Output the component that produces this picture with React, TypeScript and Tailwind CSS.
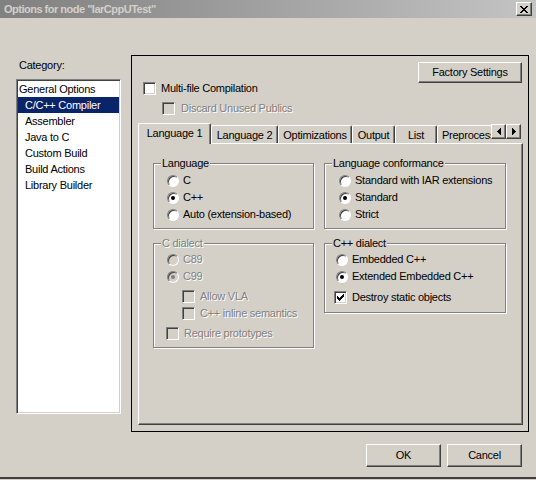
import type { ReactNode } from 'react';

const raised =
  'border border-t-white border-l-white border-r-[#404040] border-b-[#404040] shadow-[inset_-1px_-1px_#808080]';
const sunken =
  'border border-t-[#808080] border-l-[#808080] border-r-white border-b-white shadow-[inset_1px_1px_#404040,inset_-1px_-1px_#d4d0c8]';

function Label({ disabled, children }: { disabled?: boolean; children: ReactNode }) {
  return (
    <span className={disabled ? 'whitespace-nowrap text-[#808080] [text-shadow:1px_1px_0_#ffffff]' : 'whitespace-nowrap text-black'}>
      {children}
    </span>
  );
}

function Check({ checked, disabled }: { checked?: boolean; disabled?: boolean }) {
  return (
    <span
      className={`flex h-[13px] w-[13px] shrink-0 items-center justify-center ${sunken} ${
        disabled ? 'bg-[#d4d0c8]' : 'bg-white'
      }`}
    >
      {checked && (
        <svg width="7" height="7" viewBox="0 0 7 7" fill={disabled ? '#808080' : '#000'}>
          <path d="M0 2h1v3H0z M1 3h1v3H1z M2 4h1v3H2z M3 3h1v3H3z M4 2h1v3H4z M5 1h1v3H5z M6 0h1v3H6z" />
        </svg>
      )}
    </span>
  );
}

function Radio({ checked, disabled }: { checked?: boolean; disabled?: boolean }) {
  return (
    <span
      className={`flex h-[12px] w-[12px] shrink-0 items-center justify-center rounded-full border border-t-[#808080] border-l-[#808080] border-r-white border-b-white shadow-[inset_1px_1px_#404040] ${
        disabled ? 'bg-[#d4d0c8]' : 'bg-white'
      }`}
    >
      {checked && <span className={`h-[4px] w-[4px] rounded-full ${disabled ? 'bg-[#808080]' : 'bg-black'}`} />}
    </span>
  );
}

function RadioRow({ label, checked, disabled }: { label: string; checked?: boolean; disabled?: boolean }) {
  return (
    <div className="flex h-[17px] items-center gap-[4px]">
      <Radio checked={checked} disabled={disabled} />
      <Label disabled={disabled}>{label}</Label>
    </div>
  );
}

function CheckRow({
  label,
  checked,
  disabled,
  className = '',
}: {
  label: string;
  checked?: boolean;
  disabled?: boolean;
  className?: string;
}) {
  return (
    <div className={`flex h-[17px] items-center gap-[5px] ${className}`}>
      <Check checked={checked} disabled={disabled} />
      <Label disabled={disabled}>{label}</Label>
    </div>
  );
}

function Group({
  title,
  disabled,
  className,
  children,
}: {
  title: string;
  disabled?: boolean;
  className: string;
  children: ReactNode;
}) {
  return (
    <div className={`relative border border-[#808080] shadow-[inset_1px_1px_#ffffff,1px_1px_#ffffff] ${className}`}>
      <span className="absolute left-[7px] top-[-7px] bg-[#d4d0c8] px-[1px] leading-[13px]">
        <Label disabled={disabled}>{title}</Label>
      </span>
      {children}
    </div>
  );
}

function Button({ children, className }: { children: ReactNode; className: string }) {
  return (
    <button type="button" className={`flex items-center justify-center bg-[#d4d0c8] text-black ${raised} ${className}`}>
      {children}
    </button>
  );
}

const tabs = [
  { label: 'Language 2', w: 'w-[67px]' },
  { label: 'Optimizations', w: 'w-[74px]' },
  { label: 'Output', w: 'w-[43px]' },
  { label: 'List', w: 'w-[42px]' },
];

const categories = ['Assembler', 'Java to C', 'Custom Build', 'Build Actions', 'Library Builder'];

export default function App() {
  return (
    <div className="flex h-[480px] w-[536px] flex-col overflow-hidden bg-[#d4d0c8] font-['Liberation_Sans',Arial,sans-serif] text-[11px] leading-[13px] tracking-[-0.25px] text-black">
      {/* title bar */}
      <div className="flex h-[18px] shrink-0 items-center justify-between bg-linear-to-r from-[#808080] to-[#c4c4c4] pl-[4px] pr-[4px]">
        <span className="text-[11px] font-bold tracking-[-0.5px] text-[#d4d0c8]">Options for node "IarCppUTest"</span>
        <span className={`flex h-[14px] w-[16px] items-center justify-center bg-[#d4d0c8] ${raised}`}>
          <svg width="8" height="7" viewBox="0 0 8 7" fill="#000">
            <path d="M0 0h2v1H0z M6 0h2v1H6z M1 1h2v1H1z M5 1h2v1H5z M2 2h4v1H2z M3 3h2v1H3z M2 4h4v1H2z M1 5h2v1H1z M5 5h2v1H5z M0 6h2v1H0z M6 6h2v1H6z" />
          </svg>
        </span>
      </div>

      {/* body */}
      <div className="flex pt-[37px]">
        <div className="flex flex-col pl-[16px]">
          <div className="mt-[4px] h-[13px] pl-[3px]">Category:</div>
          <div className={`mt-[7px] h-[335px] w-[105px] bg-white p-[1px] ${sunken}`}>
            <div className="h-[16px] pl-[1px] leading-[16px]">General Options</div>
            <div className="h-[16px] bg-[#0a246a] pl-[7px] leading-[16px] text-white">C/C++ Compiler</div>
            {categories.map((c) => (
              <div key={c} className="h-[16px] pl-[7px] leading-[16px]">
                {c}
              </div>
            ))}
          </div>
        </div>

        <div className="ml-[10px] flex h-[377px] w-[398px] flex-col border border-black">
          <div className="flex justify-between">
            <div className="flex flex-col pl-[11px] pt-[26px]">
              <div className="flex h-[13px] items-center gap-[5px]">
                <Check />
                <Label>Multi-file Compilation</Label>
              </div>
              <div className="ml-[19px] mt-[7px] flex h-[13px] items-center gap-[6px]">
                <Check disabled />
                <Label disabled>Discard Unused Publics</Label>
              </div>
            </div>
            <Button className="mr-[6px] mt-[6px] h-[21px] w-[104px]">Factory Settings</Button>
          </div>

          {/* tab control */}
          <div className="ml-[6px] mt-[8px] w-[385px]">
            <div className="relative flex h-[20px] items-end">
              <div className="relative z-10 -mb-[1px] flex h-[21px] w-[73px] shrink-0 items-start justify-center rounded-t-[2px] border-l border-r border-t border-l-white border-r-[#404040] border-t-white bg-[#d4d0c8] pt-[3px] shadow-[inset_-1px_0_#808080]">
                Language 1
              </div>
              <div className="flex h-[18px] flex-1 items-end overflow-hidden">
                {tabs.map((t) => (
                  <div
                    key={t.label}
                    className={`flex h-[18px] shrink-0 items-center justify-center rounded-t-[2px] border-l border-r border-t border-l-white border-r-[#404040] border-t-white pt-[1px] shadow-[inset_-1px_0_#808080] ${t.w}`}
                  >
                    {t.label}
                  </div>
                ))}
                <div className="flex h-[18px] w-[80px] shrink-0 items-center rounded-t-[2px] border-l border-t border-l-white border-t-white pl-[4px] pt-[1px]">
                  Preprocessor
                </div>
              </div>
              <div className="absolute right-[2px] top-[1px] z-20 flex">
                <span className={`flex h-[15px] w-[15px] items-center justify-center bg-[#d4d0c8] ${raised}`}>
                  <svg width="4" height="7" viewBox="0 0 4 7" fill="#000">
                    <path d="M3 0h1v7H3z M2 1h1v5H2z M1 2h1v3H1z M0 3h1v1H0z" />
                  </svg>
                </span>
                <span className={`flex h-[15px] w-[15px] items-center justify-center bg-[#d4d0c8] ${raised}`}>
                  <svg width="4" height="7" viewBox="0 0 4 7" fill="#000">
                    <path d="M0 0h1v7H0z M1 1h1v5H1z M2 2h1v3H2z M3 3h1v1H3z" />
                  </svg>
                </span>
              </div>
            </div>

            <div className="h-[282px] border-b border-l border-r border-t border-b-[#404040] border-l-white border-r-[#404040] border-t-white pl-[14px] pt-[19px] shadow-[inset_-1px_-1px_#808080]">
              <div className="grid grid-cols-[161px_182px] items-start gap-x-[10px] gap-y-[14px]">
                <Group title="Language" className="h-[66px] pl-[13px] pt-[8px]">
                  <RadioRow label="C" />
                  <RadioRow label="C++" checked />
                  <RadioRow label="Auto (extension-based)" />
                </Group>
                <Group title="Language conformance" className="h-[66px] pl-[14px] pt-[8px]">
                  <RadioRow label="Standard with IAR extensions" />
                  <RadioRow label="Standard" checked />
                  <RadioRow label="Strict" />
                </Group>
                <Group title="C dialect" disabled className="h-[105px] pl-[13px] pt-[7px]">
                  <RadioRow label="C89" disabled />
                  <RadioRow label="C99" checked disabled />
                  <CheckRow label="Allow VLA" disabled className="ml-[15px] mt-[3px] gap-[4px]" />
                  <CheckRow label="C++ inline semantics" disabled className="ml-[15px] gap-[4px]" />
                  <CheckRow label="Require prototypes" disabled className="-ml-[1px] mt-[3px]" />
                </Group>
                <Group title="C++ dialect" className="h-[70px] pl-[11px] pt-[7px]">
                  <RadioRow label="Embedded C++" />
                  <RadioRow label="Extended Embedded C++" checked />
                  <CheckRow label="Destroy static objects" checked className="-ml-[2px] mt-[4px]" />
                </Group>
              </div>
            </div>
          </div>
        </div>
      </div>

      {/* footer */}
      <div className="mt-[12px] flex justify-end gap-[6px] pr-[14px]">
        <Button className="h-[23px] w-[75px]">OK</Button>
        <Button className="h-[23px] w-[75px]">Cancel</Button>
      </div>
      <div className="flex-1" />
      <div className="h-[2px] bg-[#404040]" />
      <div className="h-[1px]" />
    </div>
  );
}
